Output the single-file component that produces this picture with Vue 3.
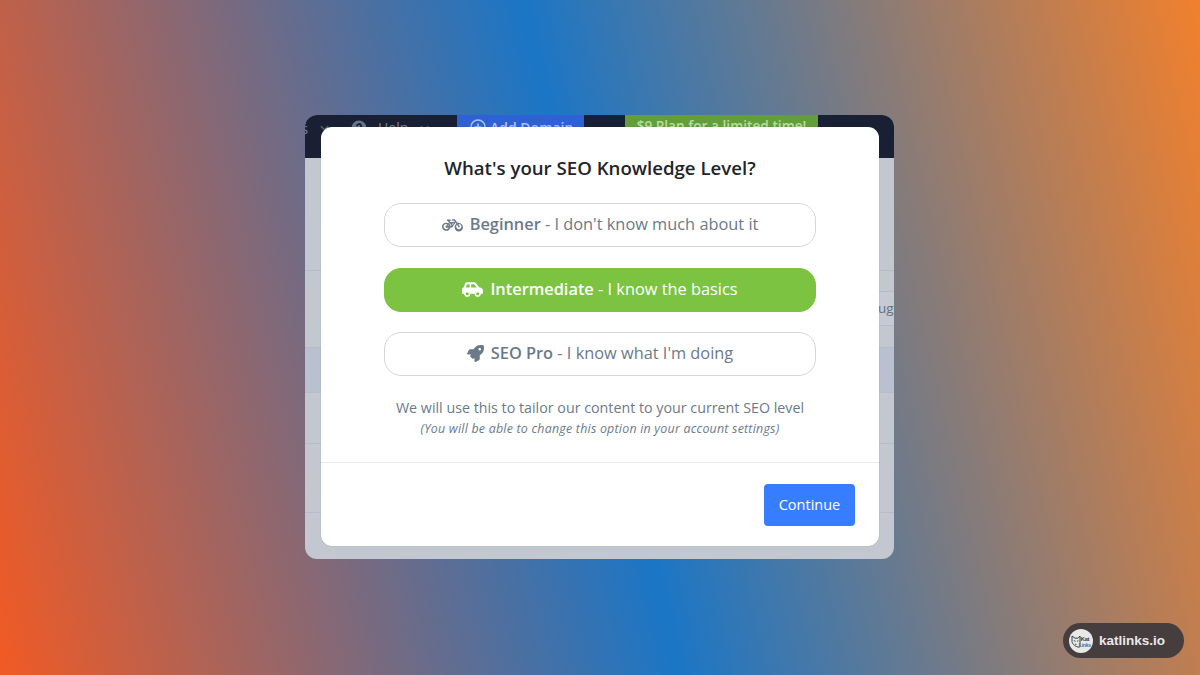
<template>
  <div class="stage">
    <div class="screen">
      <!-- 遮罩后的应用页面 -->
      <header class="topbar">
        <span class="topbar__item topbar__item--cut">s</span>
        <svg class="topbar__chevron" viewBox="0 0 10 6"><path d="M1 1l4 4 4-4" /></svg>
        <svg class="topbar__help" viewBox="0 0 16 16">
          <circle cx="8" cy="8" r="7.5" />
          <path d="M5.8 6.2a2.2 2.2 0 1 1 3.2 2c-.7.4-1 .7-1 1.4M8 11.4v1.2" />
        </svg>
        <span class="topbar__item topbar__item--help">Help</span>
        <svg class="topbar__chevron topbar__chevron--help" viewBox="0 0 10 6"><path d="M1 1l4 4 4-4" /></svg>
        <span class="topbar__btn topbar__btn--add">
          <svg class="topbar__plus" viewBox="0 0 16 16"><circle cx="8" cy="8" r="7" /><path d="M8 4.5v7M4.5 8h7" /></svg>
          Add Domain
        </span>
        <span class="topbar__btn topbar__btn--plan">$9 Plan for a limited time!</span>
      </header>
      <div class="rows">
        <div v-for="(row, i) in rows" :key="i" class="row" :class="{ 'row--tint': row.tint }" :style="{ height: row.height + 'px' }">
          <span v-if="row.text" class="row__field">{{ row.text }}</span>
        </div>
      </div>

      <!-- 弹窗 -->
      <section class="modal">
        <div class="modal__body">
          <h1 class="modal__title">What's your SEO Knowledge Level?</h1>
          <button
            v-for="level in levels"
            :key="level.name"
            class="level"
            :class="{ 'level--active': selected === level.name }"
            @click="selected = level.name"
          >
            <svg class="level__icon" :class="`level__icon--${level.icon}`" :viewBox="icons[level.icon].box">
              <path :d="icons[level.icon].path" />
            </svg>
            <span class="level__label"><b>{{ level.name }}</b> - {{ level.text }}</span>
          </button>
          <p class="modal__note">We will use this to tailor our content to your current SEO level</p>
          <p class="modal__hint">(You will be able to change this option in your account settings)</p>
        </div>
        <footer class="modal__footer">
          <button class="continue">Continue</button>
        </footer>
      </section>
    </div>

    <div class="brand">
      <svg class="brand__logo" viewBox="0 0 24 24">
        <circle cx="12" cy="12" r="12" fill="#e9e8e8" />
        <path d="M10.500 18.300C6.500 17.800 3.500 15.500 3 12.500V7l3 2.200h3L11 7v11" fill="none" stroke="#34434c" stroke-width="1" />
        <path d="M4.800 11.500l1.800.8M8 12.300l1.500-.6M6 15l1.500.5" fill="none" stroke="#34434c" stroke-width=".9" />
        <text x="11.500" y="11.800" font-size="6" fill="#34434c">Kat</text>
        <text x="9.800" y="17.800" font-size="5.200" fill="#2f76ae">Links</text>
      </svg>
      <span class="brand__name">katlinks.io</span>
    </div>
  </div>
</template>

<script setup>
import { ref } from 'vue'

const selected = ref('Intermediate')

const levels = [
  { name: 'Beginner', text: "I don't know much about it", icon: 'bicycle' },
  { name: 'Intermediate', text: 'I know the basics', icon: 'car' },
  { name: 'SEO Pro', text: "I know what I'm doing", icon: 'rocket' }
]

// 背景表格的行高
const rows = [
  { height: 113 },
  { height: 77, text: 'ug' },
  { height: 45, tint: true },
  { height: 51 },
  { height: 69 },
  { height: 46 }
]

const icons = {
  bicycle: {
    box: '0 0 640 512',
    path: 'M512.500 192.200c-17.200 0-33.600 3.500-48.500 9.700L412 116c-8-13-18-20-34-20h-58c-14 0-24 10-24 24s10 24 24 24h50l20 32H248l-14-24h14c13 0 24-11 24-24s-10-24-24-24h-80c-13 0-24 11-24 24s11 24 24 24h14l28 48-12 18c-19-12-42-18-66-18C60 192 2 248 0 317c-2 73 57 132 130 131 62-1 114-44 126-104h48c8 0 15-4 20-11l91-141 24 40c-34 26-55 67-54 114 2 70 60 126 130 125 71-1 127-60 125-131-2-70-58-126-127.500-126zM186 268c9 10 16 23 20 36h-44l24-36zM128 400c-44 0-80-36-80-80s36-80 80-80c10 0 20 2 29 5l-49 74c-11 16 1 37 20 37h78c-12 26-39 44-78 44zm162-104h-34c-5-25-16-47-33-65l15-23 52 88zm38-22l-29-50h62l-33 50zm188 126c-45 2-83-34-83-80 0-23 10-44 25-59l46 76c4 8 13 10 20 6l14-9c8-4 10-13 6-20l-45-74c46-10 93 27 93 80 0 43-34 78-76 80z'
  },
  car: {
    box: '0 0 640 512',
    path: 'M544 192h-16L420 56c-12-15-30-24-49-24H155c-26 0-50 16-60 40L48 194c-28 7-48 32-48 62v112c0 9 7 16 16 16h48c0 53 43 96 96 96s96-43 96-96h128c0 53 43 96 96 96s96-43 96-96h48c9 0 16-7 16-16v-80c0-53-43-96-96-96zM160 432c-26 0-48-22-48-48s22-48 48-48 48 22 48 48-22 48-48 48zm72-240H116l38-96h78v96zm48 0V96h91l77 96H280zm200 240c-26 0-48-22-48-48s22-48 48-48 48 22 48 48-22 48-48 48z'
  },
  rocket: {
    box: '0 0 512 512',
    path: 'M505 19c-1-5-7-11-12-12C461 0 436 0 411 0 308 0 246 55 200 128H95c-16 0-36 12-43 27L3 253c-2 4-3 8-3 11 0 13 11 24 24 24h104l-23 23c-11 11-13 33 0 46l51 50c11 11 32 13 45 0l23-23v104c0 13 11 24 24 24 3 0 8-1 11-3l98-49c15-7 27-27 27-43V312c73-46 128-108 128-211 0-25 0-50-7-82zM384 168a40 40 0 1 1 0-80 40 40 0 0 1 0 80z'
  }
}
</script>

<style>
body {
  margin: 0;
}
</style>

<style scoped>
.stage {
  position: relative;
  box-sizing: border-box;
  width: 1200px;
  height: 675px;
  padding: 115px 0 0 305px;
  overflow: hidden;
  background: linear-gradient(77deg, #f15a24 0%, #1b76c6 50%, #f1802d 100%);
  font-family: 'Open Sans', 'Noto Sans', sans-serif;
}

.screen {
  position: relative;
  width: 589px;
  height: 444px;
  border-radius: 12px;
  overflow: hidden;
  background: #c2c7d0;
}

.topbar {
  display: flex;
  height: 43px;
  background: #192034;
  color: #7b8292;
  font-size: 14px;
  line-height: 26px;
}

.topbar__item--cut {
  width: 19px;
  margin-left: -4px;
  font-size: 15px;
}

.topbar__chevron {
  width: 9px;
  height: 6px;
  margin: 10px 0 0;
  fill: none;
  stroke: #5c6477;
  stroke-width: 1.5;
}

.topbar__help {
  width: 16px;
  height: 16px;
  margin: 5px 0 0 22px;
  fill: #69728a;
}

.topbar__help path {
  fill: none;
  stroke: #192034;
  stroke-width: 1.8;
}

.topbar__item--help {
  width: 32px;
  margin-left: 11px;
  line-height: 25px;
}

.topbar__chevron--help {
  margin-left: 10px;
}

.topbar__btn {
  box-sizing: border-box;
  font-weight: 600;
  white-space: nowrap;
}

.topbar__btn--add {
  display: flex;
  width: 127px;
  margin-left: 28px;
  padding-left: 13px;
  background: #2e62d4;
  color: #a9c1f3;
  line-height: 25px;
}

.topbar__plus {
  width: 16px;
  height: 16px;
  margin: 4px 4px 0 0;
  fill: none;
  stroke: #a9c1f3;
  stroke-width: 1.6;
}

.topbar__btn--plan {
  width: 193px;
  margin-left: 41px;
  background: #629f3b;
  color: #b9dca0;
  font-size: 13.700px;
  line-height: 22px;
  text-align: center;
}

.row {
  display: flex;
  align-items: flex-start;
  justify-content: flex-end;
  box-sizing: border-box;
  border-bottom: 1px solid #b5bbc8;
}

.row:last-child {
  border-bottom: none;
}

.row--tint {
  background: #b9c1d0;
}

.row__field {
  box-sizing: border-box;
  width: 16px;
  height: 35px;
  margin-top: 20px;
  border: solid #b5bbc8;
  border-width: 1px 0;
  background: #c5cad4;
  color: #66717f;
  font-size: 13.500px;
  line-height: 32px;
}

.modal {
  position: absolute;
  top: 12px;
  left: 16px;
  width: 558px;
  height: 419px;
  border-radius: 11px;
  background: #fff;
  box-shadow: 0 0 1px rgba(40, 50, 70, 0.4);
}

.modal__body {
  display: flex;
  flex-direction: column;
  align-items: center;
  box-sizing: border-box;
  height: 336px;
  padding-top: 28px;
  border-bottom: 1px solid #e7e9ec;
}

.modal__title {
  margin: 0 0 22px;
  color: #212529;
  font-size: 18.650px;
  font-weight: 600;
  line-height: 26px;
  white-space: nowrap;
}

.level {
  display: flex;
  align-items: center;
  justify-content: center;
  box-sizing: border-box;
  width: 432px;
  height: 44px;
  margin: 0 0 20.500px;
  padding: 0 0 2px;
  border: 1px solid #d4d6da;
  border-radius: 17px;
  background: #fff;
  color: #6b7a89;
  font-family: inherit;
  font-size: 16.350px;
  white-space: nowrap;
  cursor: pointer;
}

.level--active {
  padding-bottom: 1px;
  border-color: #7cc342;
  background: #7cc342;
  color: #fff;
}

.level b {
  font-weight: 600;
}

.level__icon {
  width: 21px;
  height: 17px;
  margin-right: 7px;
  fill: currentColor;
}

.level__icon--rocket {
  width: 17px;
}

.modal__note {
  margin: 0;
  color: #6b7a89;
  font-size: 14.280px;
  line-height: 22px;
  white-space: nowrap;
}

.modal__hint {
  margin: 0;
  color: #6b7a89;
  font-size: 12.400px;
  font-style: italic;
  letter-spacing: 0.23px;
  line-height: 20px;
  white-space: nowrap;
}

.modal__footer {
  display: flex;
  justify-content: flex-end;
  padding: 21px 24px 0 0;
}

.continue {
  width: 91px;
  height: 42px;
  padding: 0 0 2px;
  border: none;
  border-radius: 4px;
  background: #377dff;
  color: #fff;
  font-family: inherit;
  font-size: 14.500px;
  cursor: pointer;
}

.brand {
  position: absolute;
  top: 623px;
  left: 1063px;
  display: flex;
  align-items: center;
  box-sizing: border-box;
  width: 121px;
  height: 35px;
  padding-left: 6px;
  border-radius: 18px;
  background: #463d3e;
}

.brand__logo {
  width: 24px;
  height: 24px;
  margin-right: 6px;
}

.brand__logo text {
  font-family: 'Liberation Sans', Arial, sans-serif;
  font-weight: 700;
  letter-spacing: -0.3px;
}

.brand__name {
  color: #ece8e8;
  font-family: 'Liberation Sans', Arial, sans-serif;
  font-size: 13.500px;
  font-weight: 700;
}
</style>
